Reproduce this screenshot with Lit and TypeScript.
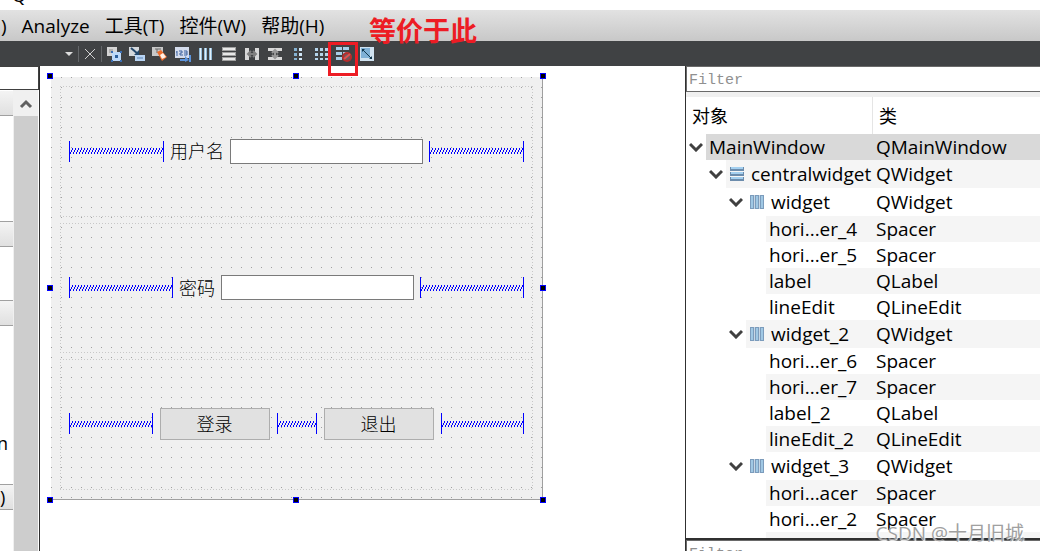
import { LitElement, html, svg, css, nothing } from "lit";
import { customElement, property } from "lit/decorators.js";

interface TreeItem {
  depth: number;
  name: string;
  type: string;
  icon?: "rows" | "columns";
  open?: boolean;
  selected?: boolean;
}

const ITEMS: TreeItem[] = [
  { depth: 0, name: "MainWindow", type: "QMainWindow", open: true, selected: true },
  { depth: 1, name: "centralwidget", type: "QWidget", icon: "rows", open: true },
  { depth: 2, name: "widget", type: "QWidget", icon: "columns", open: true },
  { depth: 3, name: "hori...er_4", type: "Spacer" },
  { depth: 3, name: "hori...er_5", type: "Spacer" },
  { depth: 3, name: "label", type: "QLabel" },
  { depth: 3, name: "lineEdit", type: "QLineEdit" },
  { depth: 2, name: "widget_2", type: "QWidget", icon: "columns", open: true },
  { depth: 3, name: "hori...er_6", type: "Spacer" },
  { depth: 3, name: "hori...er_7", type: "Spacer" },
  { depth: 3, name: "label_2", type: "QLabel" },
  { depth: 3, name: "lineEdit_2", type: "QLineEdit" },
  { depth: 2, name: "widget_3", type: "QWidget", icon: "columns", open: true },
  { depth: 3, name: "hori...acer", type: "Spacer" },
  { depth: 3, name: "hori...er_2", type: "Spacer" },
];

const TOOLS: { label: string; art: unknown }[] = [
  {
    label: "Edit Widgets",
    art: svg`<rect x="1" y="1" width="10" height="9" fill="#d4d4d4"/><rect x="3" y="3" width="4" height="4" fill="#b0b0b0"/>
      <rect x="6" y="6" width="9" height="9" fill="#bcd8f8"/><rect x="9" y="9" width="3" height="3" fill="#2c5f9c"/>
      <path d="M5 5h2v2H5zM14 5h2v2h-2zM5 14h2v2H5zM14 14h2v2h-2z" fill="#3b6fb4"/>`,
  },
  {
    label: "Edit Signals/Slots",
    art: svg`<rect x="0" y="1" width="10" height="9" fill="#d4d8dc"/><path d="M2 2l7 6" stroke="#24486c" stroke-width="2"/><path d="M10 4v5H5z" fill="#24486c"/>
      <rect x="6" y="9" width="10" height="6" fill="#b8d4f4"/><path d="M8 12h6" stroke="#5a83b4"/>`,
  },
  {
    label: "Edit Buddies",
    art: svg`<rect x="0" y="1" width="11" height="9" fill="#c8c8c8"/><path d="M3 3h6M5 3v4" stroke="#686868"/>
      <path d="M5 6l4-2 6 7-5 4z" fill="#ee6c2c"/><path d="M8 9l3-2 3 4-4 2z" fill="#fff2e8"/>`,
  },
  {
    label: "Edit Tab Order",
    art: svg`<rect x="0" y="1" width="14" height="11" fill="#d4dcec"/><path d="M2 5v5M1 6h1M4 5h3v2H5v2h3M9 5h3v4H9M9 7h3" fill="none" stroke="#3c62a0"/>
      <path d="M5 14h6M15 9v7" stroke="#5c94dc" stroke-width="2"/><path d="M10 10l4 4-4 2z" fill="#5c94dc"/>`,
  },
  {
    label: "Lay Out Horizontally",
    art: svg`<path d="M1 2h3v12H1zM6 2h3v12H6zM11 2h3v12h-3z" fill="#94bcd8"/><path d="M2 2h1v12H2zM7 2h1v12H7zM12 2h1v12h-1z" fill="#e2f0fa"/>`,
  },
  {
    label: "Lay Out Vertically",
    art: svg`<path d="M1 1h14v4H1zM1 6h14v4H1zM1 11h14v4H1z" fill="#a0a0a0"/><path d="M2 2h12v2H2zM2 7h12v2H2zM2 12h12v2H2z" fill="#e8e8e8"/>`,
  },
  {
    label: "Lay Out Horizontally in Splitter",
    art: svg`<path d="M1 2h4v12H1zM11 2h4v12h-4z" fill="#d8d8d8"/><path d="M5 8h6M7 5L4 8l3 3M9 5l3 3-3 3" fill="none" stroke="#808080" stroke-width="2"/>`,
  },
  {
    label: "Lay Out Vertically in Splitter",
    art: svg`<path d="M1 2h14v3H1zM1 11h14v3H1z" fill="#d8d8d8"/><path d="M8 4v8M5 7l3-3 3 3M5 9l3 3 3-3" fill="none" stroke="#989898" stroke-width="2"/>`,
  },
  {
    label: "Lay Out in a Form Layout",
    art: svg`<path d="M4 2h3v3H4zM4 7h3v3H4zM4 12h3v2H4z" fill="#86b4d4"/><path d="M9 2h3v3H9zM9 7h3v3H9zM9 12h3v2H9z" fill="#d0e6f6"/>`,
  },
  {
    label: "Lay Out in a Grid",
    art: svg`<path d="M2 2h3v3H2zM2 7h3v3H2zM2 12h3v2H2zM7 2h3v3H7zM7 7h3v3H7zM7 12h3v2H7zM12 2h3v3h-3zM12 7h3v3h-3zM12 12h3v2h-3z" fill="#b4d4ea"/>`,
  },
  {
    label: "Break Layout",
    art: svg`<path d="M0 1h6v3H0zM7 1h6v3H7zM0 6h6v3H0zM7 6h5v3H7zM0 11h6v3H0z" fill="#a8cfe8"/>
      <circle cx="11" cy="11" r="5" fill="#b82c2c"/><circle cx="11" cy="11" r="3" fill="#70585c"/><path d="M8 13l6-5" stroke="#e25050" stroke-width="2"/>`,
  },
  {
    label: "Adjust Size",
    art: svg`<rect x="1" y="1" width="14" height="14" fill="#d0e2f0"/><rect x="2" y="2" width="9" height="10" fill="#7fb0d6"/>
      <path d="M4 4l8 8" stroke="#12384e" stroke-width="1"/><path d="M3 3h3L3 6zM13 13h-3l3-3z" fill="#12384e"/>`,
  },
];

/** Stretchable spring drawn between two end bars. */
@customElement("layout-spacer")
export class LayoutSpacer extends LitElement {
  static styles = css`
    :host { display: flex; align-items: center; flex: 1; min-width: 0; height: 21px;
      box-sizing: border-box; border-left: 1px solid #00f; border-right: 1px solid #00f; }
    .spring { width: 100%; height: 6px; display: block; }
  `;
  render() {
    return html`<svg class="spring" aria-hidden="true" shape-rendering="crispEdges">
      <defs><pattern id="coil" width="3" height="6" patternUnits="userSpaceOnUse">
        <path d="M2 0h1v2h-1zM1 2h1v2h-1zM0 4h1v2h-1z" fill="#00f" />
      </pattern></defs>
      <rect width="100%" height="6" fill="url(#coil)" />
    </svg>`;
  }
}

/** The form under design, with its selection handles. */
@customElement("form-canvas")
export class FormCanvas extends LitElement {
  static styles = css`
    :host { display: block; padding: 11px; background: #fff; min-width: 0; }
    .form { position: relative; box-sizing: border-box; width: 492px; height: 423px; padding: 9px;
      border: solid #a0a0a0; border-width: 0 1px 1px 0;
      display: grid; grid-template-rows: repeat(3, 1fr); gap: 6px;
      background: conic-gradient(from 270deg at 1px 1px, #a0a0a0 90deg, transparent 0) 0 0 / 10px 10px, #f0f0f0; }
    .row { --h: repeating-linear-gradient(90deg, #c8c8c8 0 1px, transparent 1px 3px);
      --v: repeating-linear-gradient(#c8c8c8 0 1px, transparent 1px 3px);
      display: flex; align-items: center; gap: 6px; padding: 0 9px;
      background: var(--h) top / 100% 1px no-repeat, var(--h) bottom / 100% 1px no-repeat,
        var(--v) left / 1px 100% no-repeat, var(--v) right / 1px 100% no-repeat; }
    .row.actions { gap: 7px; padding-bottom: 2px; }
    .fixed { flex: 0 0 40px; }
    label, .push { font: 300 18px/24px "Noto Sans CJK SC", sans-serif; color: #000; white-space: nowrap; }
    label { padding-bottom: 2px; }
    .edit { box-sizing: border-box; width: 193px; height: 25px; border: 1px solid #7a7a7a; background: #fff;
      padding: 0 4px; margin: 0; border-radius: 0; font: 16px "Liberation Sans", sans-serif; outline: none; }
    .push { box-sizing: border-box; width: 110px; height: 32px; padding: 0 0 2px; margin: 0; border: 1px solid #adadad;
      border-radius: 0; background: #e1e1e1; }
    .handle { position: absolute; width: 6px; height: 6px; box-sizing: border-box; background: #000; border: 1px solid #00f; }
    .l { left: -4px; } .c { left: calc(50% - 4px); } .r { right: -4px; }
    .t { top: -4px; } .m { top: calc(50% - 3px); } .b { bottom: -4px; }
  `;
  render() {
    return html`<div class="form">
      <div class="row">
        <layout-spacer></layout-spacer><label for="user">用户名</label><input class="edit" id="user" type="text" /><layout-spacer></layout-spacer>
      </div>
      <div class="row">
        <layout-spacer></layout-spacer><label for="pass">密码</label><input class="edit" id="pass" type="text" /><layout-spacer></layout-spacer>
      </div>
      <div class="row actions">
        <layout-spacer></layout-spacer><button class="push">登录</button><layout-spacer class="fixed"></layout-spacer><button class="push">退出</button><layout-spacer></layout-spacer>
      </div>
      ${["l t", "c t", "r t", "l m", "r m", "l b", "c b", "r b"].map((p) => html`<span class="handle ${p}"></span>`)}
    </div>`;
  }
}

@customElement("object-inspector")
export class ObjectInspector extends LitElement {
  @property({ attribute: false }) items: TreeItem[] = [];

  static styles = css`
    :host { display: flex; flex-direction: column; min-width: 0; overflow: hidden; background: #f0f0f0;
      border-left: 1px solid #303030; box-sizing: border-box; color: #000; font: 19px "Open Sans", "Noto Sans CJK SC", sans-serif; }
    .filter { box-sizing: border-box; flex: none; width: 100%; height: 26px; margin: 0; padding: 3px 2px 0; border: solid #6a6a6a;
      border-width: 1px 0 1px 1px; border-radius: 0; background: #fff; font: 15px "Liberation Mono", monospace; outline: none; }
    .filter::placeholder { color: #909090; opacity: 1; }
    .view { margin-top: 5px; flex: none; height: 441px; overflow: hidden; background: #fff; border-bottom: 2px solid #303030; }
    table { width: 100%; table-layout: fixed; border-collapse: separate; border-spacing: 0; }
    th { height: 37px; padding: 0 6px; font-size: 18px; font-weight: 400; text-align: left; box-sizing: border-box; line-height: 24px; }
    th.name { width: 187px; border-right: 1px solid #e5e5e5; }
    td { height: 26px; padding: 0; line-height: 26px; white-space: nowrap; }
    .tall td { height: 28px; line-height: 28px; }
    .line { display: flex; align-items: stretch; }
    .indent { flex: none; display: flex; justify-content: flex-end; align-items: center; }
    .twist { width: 20px; height: 20px; padding: 0; border: 0; background: none; display: grid; place-items: center; }
    .content { flex: 1; min-width: 0; display: flex; align-items: center; gap: 6px; padding-left: 3px; }
    .type { padding-left: 3px; }
    .alt .content, .alt .type { background: #f5f5f5; }
    .selected .content, .selected .type { background: #d9d9d9; }
    svg { display: block; flex: none; }
  `;

  private icon(kind?: "rows" | "columns") {
    if (!kind) return nothing;
    const bars = svg`<path d="M1 1h14v14H1z" fill="#c8d6e4"/><path d="M1 1h4v14H1zM6 1h4v14H6zM11 1h4v14h-4z" fill="#7c9cbc"/><path d="M2 2h2v12H2zM7 2h2v12H7zM12 2h2v12h-2z" fill="#a0c8e4"/>`;
    const stack = svg`<path d="M1 1h14v4H1zM1 6h14v4H1zM1 11h14v4H1z" fill="#6c8cac"/><path d="M2 1h12v2H2zM2 6h12v2H2zM2 11h12v2H2z" fill="#a4d0f0"/>`;
    return html`<svg width="16" height="16" viewBox="0 0 16 16" aria-hidden="true" shape-rendering="crispEdges">${kind === "rows" ? stack : bars}</svg>`;
  }

  render() {
    return html`
      <input class="filter" type="text" placeholder="Filter" aria-label="Filter objects" />
      <div class="view"><table>
        <thead><tr><th class="name">对象</th><th>类</th></tr></thead>
        <tbody>${this.items.map((it, i) => html`
          <tr class="${it.icon ? "tall" : ""} ${it.selected ? "selected" : i % 2 ? "alt" : ""}">
            <td><div class="line">
              <span class="indent" style="width:${20 + it.depth * 20}px">${it.open
                ? html`<button class="twist" aria-label="Collapse ${it.name}"><svg width="14" height="10" viewBox="0 0 14 10"><path d="M1 2l6 6 6-6" fill="none" stroke="#404040" stroke-width="3"/></svg></button>`
                : nothing}</span>
              <span class="content">${this.icon(it.icon)}<span>${it.name}</span></span>
            </div></td>
            <td class="type">${it.type}</td>
          </tr>`)}
          <tr class="alt"><td><div class="line"><span class="indent" style="width:80px"></span><span class="content">&nbsp;</span></div></td><td class="type"></td></tr>
        </tbody>
      </table></div>
      <input class="filter" type="text" placeholder="Filter" aria-label="Filter properties" />`;
  }
}

@customElement("app-root")
export class AppRoot extends LitElement {
  static styles = css`
    :host { display: flex; flex-direction: column; position: relative; height: 100vh; overflow: hidden; background: #fff;
      font: 19px "Open Sans", "Noto Sans CJK SC", sans-serif; color: #000; }
    .title { flex: none; height: 10px; display: flex; align-items: flex-end; padding: 0 12px 10px; box-sizing: border-box; overflow: hidden;
      font-size: 18px; line-height: 10px; }
    .menu { flex: none; height: 31px; display: flex; align-items: center; gap: 15px; padding-left: 1px; overflow: hidden;
      background: linear-gradient(#e2e2e2, #c8c8c8); }
    .menu a { color: inherit; text-decoration: none; white-space: nowrap; line-height: 24px; }
    .tools { flex: none; height: 25px; display: flex; align-items: center; gap: 4px; padding-left: 63px; background: #404244; }
    .tools button { padding: 0; margin: 0; border: 0; background: none; width: 16px; height: 16px; flex: none; }
    .tools .small { width: 10px; }
    .tools .close { width: 12px; }
    .tools svg { display: block; }
    .sep { width: 1px; height: 16px; background: #64676a; flex: none; }
    .group { display: flex; align-items: center; gap: 5px; }
    .group.icons { gap: 7px; }
    .main { flex: 1; min-height: 0; display: grid; grid-template-columns: 40px minmax(0, 1fr) 355px; }
    .side { display: flex; flex-direction: column; min-height: 0; border-right: 1px solid #303030; }
    .search { box-sizing: border-box; width: 100%; height: 24px; margin: 0; padding: 0; border: solid #404040; border-width: 1px 1px 1px 0;
      border-radius: 0; background: #fff; outline: none; flex: none; }
    .body { flex: 1; min-height: 0; display: grid; grid-template-columns: 14px 24px; }
    .list { overflow: hidden; border-right: 1px solid #f0f0f0; text-align: right; line-height: 24px; font-size: 18px; }
    .head { box-sizing: border-box; height: 26px; border: solid #a0a0a0; border-width: 1px 0; background: linear-gradient(#f4f4f4, #e0e0e0); }
    .head.first { border-top-color: #fff; }
    .gap1 { height: 105px; }
    .gap2 { height: 53px; }
    .gap3 { height: 158px; display: flex; align-items: flex-end; justify-content: flex-end; padding: 0 5px 29px 0; box-sizing: border-box; }
    .last { padding-right: 8px; }
    .bar { background: #cdcdcd; display: flex; flex-direction: column; }
    .up { height: 26px; padding: 0; border: 0; background: #f0f0f0; display: grid; place-items: center; }
    .mark { position: absolute; left: 328px; top: 42px; width: 30px; height: 34px; box-sizing: border-box; border: 3px solid #ed1c24; }
    .note { position: absolute; left: 369px; top: 12px; color: #ed1c24; font: 700 27px/36px "Noto Sans CJK SC", sans-serif; }
    .credit { position: absolute; right: 16px; bottom: 4px; color: #a0a0a0; font: 19px/28px "Open Sans", "Noto Sans CJK SC", sans-serif;
      text-shadow: 1px 1px 1px #fff; white-space: nowrap; }
  `;

  render() {
    return html`
      <div class="title">Q</div>
      <nav class="menu">${[")", "Analyze", "工具(T)", "控件(W)", "帮助(H)"].map((m) => html`<a href="#">${m}</a>`)}</nav>
      <div class="tools" role="toolbar">
        <div class="group">
          <button class="small" aria-label="Open documents"><svg width="10" height="16"><path d="M2 6h8l-4 4z" fill="#ddd"/></svg></button>
          <span class="sep"></span>
          <button class="close" aria-label="Close document"><svg width="12" height="16"><path d="M1 3l10 10M11 3L1 13" stroke="#d0d0d0" stroke-width="1"/></svg></button>
          <span class="sep"></span>
        </div>
        <div class="group icons">
          ${TOOLS.map((t) => html`<button aria-label=${t.label}><svg width="16" height="16" viewBox="0 0 16 16">${t.art}</svg></button>`)}
        </div>
      </div>
      <div class="main">
        <aside class="side">
          <input class="search" type="text" aria-label="Filter widgets" />
          <div class="body">
            <div class="list">
              <div class="head first"></div><div class="gap1"></div>
              <div class="head"></div><div class="gap2"></div>
              <div class="head"></div><div class="gap3">n</div>
              <div class="head last">)</div>
            </div>
            <div class="bar"><button class="up" aria-label="Scroll up"><svg width="14" height="12" viewBox="0 0 14 12"><path d="M2 10l5-5 5 5" fill="none" stroke="#606060" stroke-width="3"/></svg></button></div>
          </div>
        </aside>
        <form-canvas></form-canvas>
        <object-inspector .items=${ITEMS}></object-inspector>
      </div>
      <div class="mark"></div>
      <div class="note">等价于此</div>
      <div class="credit">CSDN @十月旧城</div>`;
  }
}
